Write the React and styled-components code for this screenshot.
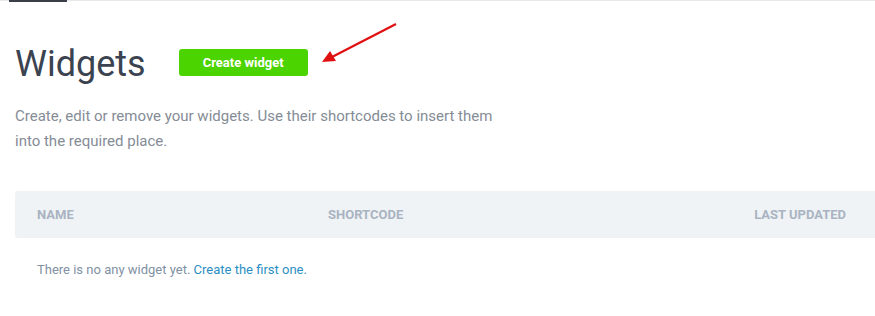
import React from "react";
import styled, { createGlobalStyle } from "styled-components";

const GlobalStyle = createGlobalStyle`
  html, body {
    margin: 0;
    padding: 0;
    background: #fff;
    font-family: Roboto, "Noto Sans", sans-serif;
  }
  * { box-sizing: border-box; }
`;

export default function App() {
  return (
    <>
      <GlobalStyle />
      <Page>
        <TopBar>
          <ActiveTab />
        </TopBar>
        <Content>
          <TitleRow>
            <Title>Widgets</Title>
            <CreateButton>Create widget</CreateButton>
            <Arrow viewBox="0 0 90 50">
              <line x1="76" y1="5" x2="12" y2="38" stroke="#e01010" strokeWidth="2.2" />
              <polygon points="2,43 10,32 16,42" fill="#e01010" />
            </Arrow>
          </TitleRow>
          <Description>
            Create, edit or remove your widgets. Use their shortcodes to insert them
            into the required place.
          </Description>
          <Table>
            <HeadRow>
              <HeadCell width="291px">Name</HeadCell>
              <HeadCell>Shortcode</HeadCell>
              <HeadCell align="right">Last updated</HeadCell>
            </HeadRow>
            <EmptyRow>
              There is no any widget yet. <EmptyLink href="#">Create the first one.</EmptyLink>
            </EmptyRow>
          </Table>
        </Content>
      </Page>
    </>
  );
}

const Page = styled.div`
  width: 875px;
  height: 316px;
  overflow: hidden;
`;

const TopBar = styled.div`
  height: 2px;
  border-top: 1px solid #e6e8eb;
  position: relative;
`;

const ActiveTab = styled.div`
  position: absolute;
  top: -1px;
  left: 9px;
  width: 58px;
  height: 2px;
  background: #3a3f47;
`;

const Content = styled.div`
  padding: 32px 0 0 15px;
`;

const TitleRow = styled.div`
  display: flex;
  align-items: center;
  position: relative;
  height: 60px;
`;

const Title = styled.h1`
  margin: 0;
  font-size: 36px;
  font-weight: 400;
  color: #3b4350;
  line-height: 1;
  margin-right: 33px;
`;

const CreateButton = styled.button`
  width: 129px;
  height: 27px;
  border: none;
  border-radius: 3px;
  background: #4cd400;
  color: #fff;
  font-family: Roboto, sans-serif;
  font-weight: 700;
  font-size: 13px;
  margin-top: -3px;
  cursor: pointer;
`;

const Arrow = styled.svg`
  position: absolute;
  left: 305px;
  top: -15px;
  width: 90px;
  height: 50px;
`;

const Description = styled.p`
  margin: 10px 0 0;
  width: 490px;
  font-size: 15px;
  line-height: 25px;
  color: #858c96;
`;

const Table = styled.div`
  margin-top: 37px;
`;

const HeadRow = styled.div`
  display: flex;
  align-items: center;
  height: 47px;
  background: #eff3f6;
  border-radius: 3px 0 0 3px;
  padding: 0 29px 0 22px;
`;

const HeadCell = styled.div`
  width: ${({ width }) => width || "auto"};
  flex: ${({ width }) => (width ? "none" : "1")};
  text-align: ${({ align }) => align || "left"};
  font-size: 13px;
  font-weight: 700;
  text-transform: uppercase;
  color: #a9b3c1;
`;

const EmptyRow = styled.div`
  padding: 24px 22px;
  font-size: 13px;
  color: #7f91a3;
`;

const EmptyLink = styled.a`
  color: #2c8fc4;
  text-decoration: none;
`;
